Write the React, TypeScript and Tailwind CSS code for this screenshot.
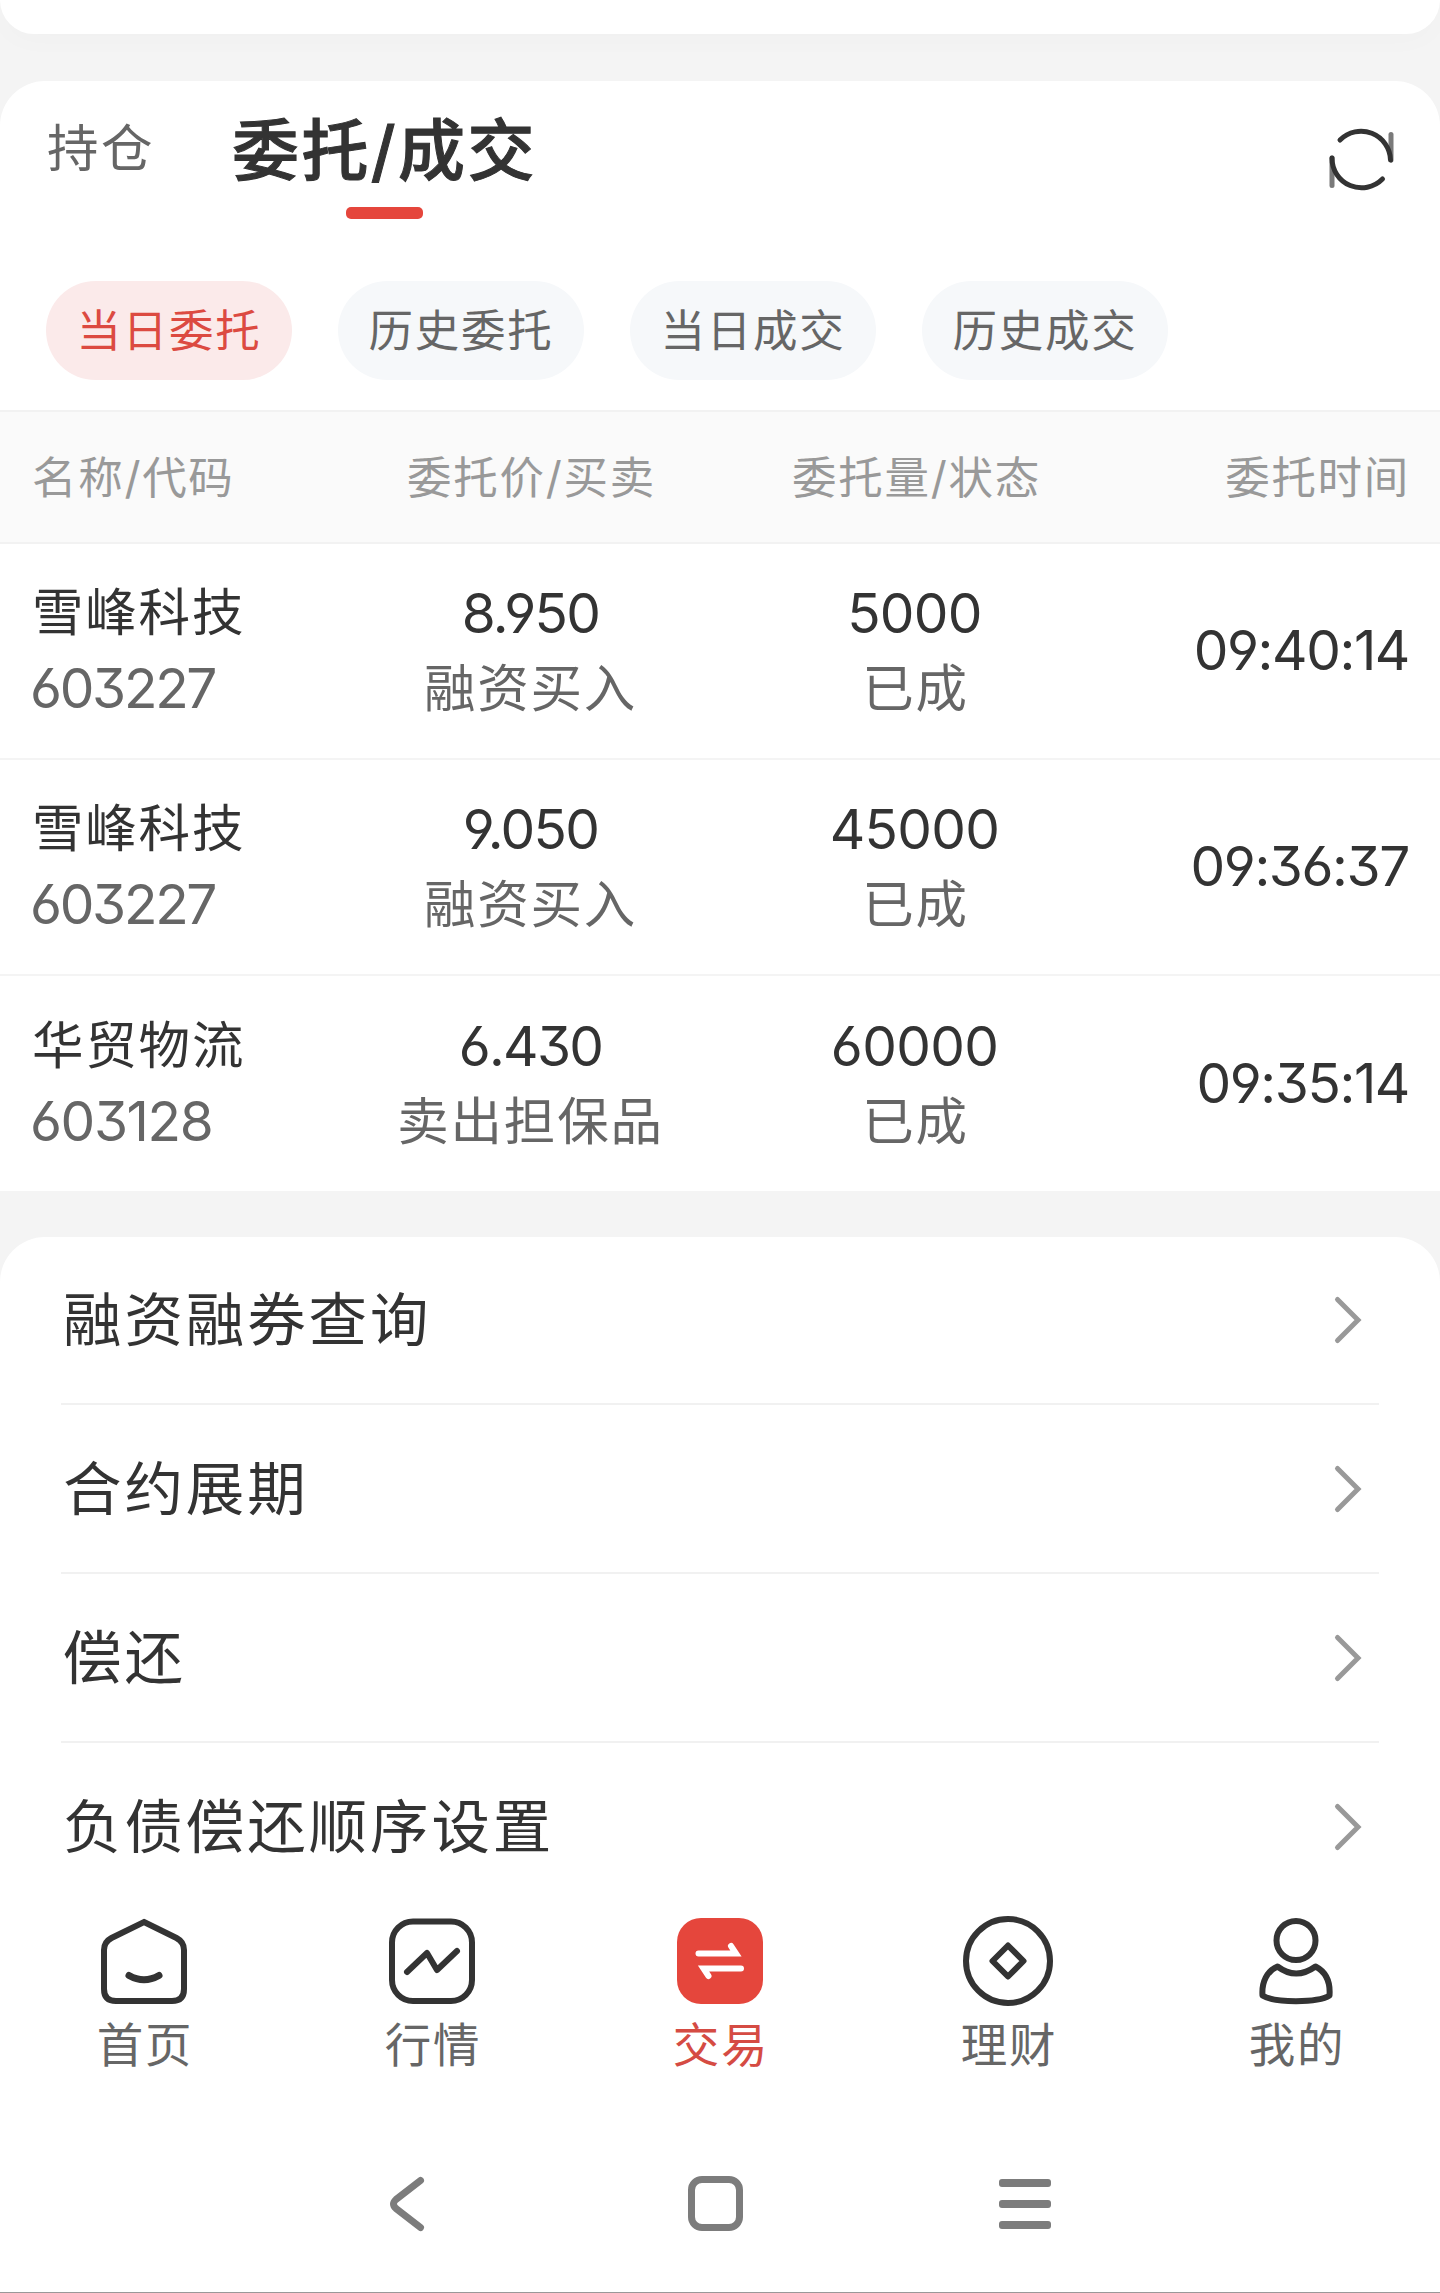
import { Fragment, type ReactNode } from "react";

const pills = ["当日委托", "历史委托", "当日成交", "历史成交"];
const heads = ["名称/代码", "委托价/买卖", "委托量/状态", "委托时间"];

const orders = [
  { name: "雪峰科技", code: "603227", price: "8.950", side: "融资买入", amount: "5000", state: "已成", time: "09:40:14" },
  { name: "雪峰科技", code: "603227", price: "9.050", side: "融资买入", amount: "45000", state: "已成", time: "09:36:37" },
  { name: "华贸物流", code: "603128", price: "6.430", side: "卖出担保品", amount: "60000", state: "已成", time: "09:35:14" },
];

const menu = ["融资融券查询", "合约展期", "偿还", "负债偿还顺序设置"];

const GRID = "grid grid-cols-[306px_385px_385px_1fr] px-8";
const NUM =
  "font-['Inter','Noto_Sans_CJK_SC',sans-serif] [font-feature-settings:'cv03','cv04','cv09'] text-[55px] leading-[56px]";
const CJK = "text-[51.500px] leading-[56px] tracking-[1.800px]";

/** Sets the slashes of a label in the Latin face. */
function Slashed({ text }: { text: string }) {
  return (
    <>
      {text.split("/").map((part, i) => (
        <Fragment key={part}>
          {i > 0 && <span className="font-['Inter',sans-serif] leading-none">/</span>}
          {part}
        </Fragment>
      ))}
    </>
  );
}

function RefreshIcon() {
  return (
    <svg width="68" height="68" viewBox="1327 125 68 68" fill="none" stroke="#333" strokeWidth="5" strokeLinecap="round">
      <path d="M1340 140A29.500 29.500 0 0 1 1390.500 160" />
      <path d="M1391 160V134.500" strokeOpacity=".65" />
      <path d="M1382.500 179A29.500 29.500 0 0 1 1332 158" />
      <path d="M1332 158V185.500" strokeOpacity=".65" />
    </svg>
  );
}

function TabIcon({ children }: { children: ReactNode }) {
  return (
    <svg width="92" height="92" viewBox="0 0 92 92" fill="none" stroke="#333" strokeWidth="6" strokeLinecap="round" strokeLinejoin="round">
      {children}
    </svg>
  );
}

const tabs = [
  {
    label: "首页",
    icon: (
      <>
        <path strokeLinejoin="miter" d="M46 7L78.500 23Q86 27 86 35V74Q86 86 74 86H18Q6 86 6 74V35Q6 27 13.500 23Z" />
        <path strokeWidth="7" d="M31 60.500Q46 69 61 60.500" />
      </>
    ),
  },
  {
    label: "行情",
    icon: (
      <>
        <rect x="6" y="6.500" width="80" height="79.500" rx="21" />
        <path d="M21 57L41 38L51 55L71 36" />
      </>
    ),
  },
  {
    label: "交易",
    active: true,
    icon: (
      <>
        <rect x="3" y="3" width="86" height="86" rx="24" fill="#e5463c" stroke="none" />
        <path stroke="#fff" strokeLinejoin="miter" d="M24.500 38.500H62L57 31" />
        <path stroke="#fff" strokeLinejoin="miter" d="M67 53.500H29.500L34.500 61" />
      </>
    ),
  },
  {
    label: "理财",
    icon: (
      <>
        <circle cx="46" cy="46" r="42" />
        <path d="M46 30.500L61.500 46L46 61.500L30.500 46Z" />
      </>
    ),
  },
  {
    label: "我的",
    icon: (
      <>
        <circle cx="46" cy="25.500" r="19.500" />
        <path d="M27.500 51.500Q46 65.500 65.500 51.500C76 57 80.500 67 79.500 80.500C68 88 24 88 12.500 80.500C11.500 67 17 56 27.500 51.500Z" />
      </>
    ),
  },
];

export default function App() {
  return (
    <div className="flex h-[2293px] w-[1440px] flex-col overflow-hidden border-b border-[#999] bg-[#f4f4f4] font-['Noto_Sans_CJK_SC',sans-serif] text-[#333]">
      <div className="h-[34px] shrink-0 rounded-b-[45px] bg-white shadow-[0_6px_30px_rgba(0,0,0,0.02)]" />

      <section className="mt-[47px] flex h-[1110px] shrink-0 flex-col rounded-t-[45px] bg-white">
        <div className="flex h-[200px] shrink-0 justify-between pr-[45px] pl-[47px]">
          <div className="flex">
            <div className="mt-6 h-20 w-[108px] text-[51.500px] leading-[80px] tracking-[2.500px] text-[#666]">持仓</div>
            <div className="ml-[77px] flex flex-col items-center">
              <div className="mt-[19px] h-[92px] text-[67px] leading-[92px] font-medium tracking-[2.400px] [-webkit-text-stroke:1px_#333]">
                <span>委托</span>
                <span className="font-['Inter',sans-serif] leading-none">/</span>
                <span>成交</span>
              </div>
              <div className="mt-[15px] h-3 w-[77px] rounded-[5px] bg-[#e5463c]" />
            </div>
          </div>
          <div className="mt-11">
            <RefreshIcon />
          </div>
        </div>

        <div className="flex gap-[46px] pl-[46px]">
          {pills.map((p, i) => (
            <div
              key={p}
              className={`flex h-[99px] w-[246px] items-center justify-center rounded-full pb-[5px] text-[44.500px] tracking-[1.700px] ${
                i === 0 ? "bg-[#fbeaea] text-[#dc4a41]" : "bg-[#f6f8fa] text-[#666]"
              }`}
            >
              {p}
            </div>
          ))}
        </div>

        <div className={`${GRID} mt-[30px] h-[134px] shrink-0 items-center border-y-2 border-[#f2f2f2] bg-[#fafafa] pb-1 text-[44.500px] tracking-[1.700px] text-[#999]`}>
          {heads.map((h, i) => (
            <div key={h} className={i === 0 ? "" : i === 3 ? "-mr-0.5 text-right" : "pl-0.5 text-center"}>
              <Slashed text={h} />
            </div>
          ))}
        </div>

        {orders.map((o, i) => (
          <div key={o.time} className={`${GRID} h-[216px] shrink-0 items-center ${i < 2 ? "border-b-2 border-[#f4f4f4]" : ""}`}>
            <div className="-mt-1.5 flex flex-col gap-6">
              <span className={CJK}>{o.name}</span>
              <span
                className={`${NUM} -mt-px -ml-0.5 text-[#666] ${o.code === "603128" ? "tracking-[-1.400px]" : "tracking-[-2.300px]"}`}
              >
                {o.code}
              </span>
            </div>
            <div className="-mt-[7px] flex flex-col items-center gap-4">
              <span className={`${NUM} mt-0.5 tracking-[-1.700px]`}>{o.price}</span>
              <span className={`${CJK} text-[#666]`}>{o.side}</span>
            </div>
            <div className="-mt-[7px] flex flex-col items-center gap-4">
              <span className={`${NUM} mt-0.5 mr-0.5 tracking-[-0.700px]`}>{o.amount}</span>
              <span className={`${CJK} text-[#666]`}>{o.state}</span>
            </div>
            <span className={`${NUM} -mt-[3px] -mr-px text-right tracking-[-1.400px]`}>{o.time}</span>
          </div>
        ))}
      </section>

      <section className="mt-[46px] h-[653px] shrink-0 overflow-hidden rounded-t-[45px] bg-white px-[61px]">
        {menu.map((m) => (
          <div key={m} className="flex h-[169px] items-center justify-between border-b-2 border-[#f1f1f1] pr-4 pl-0.5 first:h-[168px]">
            <span className="pb-2 text-[58.500px] leading-[80px] tracking-[2.900px]">{m}</span>
            <svg width="30" height="50" viewBox="0 0 30 50" fill="none" stroke="#999" strokeWidth="5" strokeLinecap="round">
              <path d="M4.500 4.500L25 25L4.500 45.500" />
            </svg>
          </div>
        ))}
      </section>

      <nav className="grid h-[200px] shrink-0 grid-cols-5 bg-white pt-[25px]">
        {tabs.map((t) => (
          <div key={t.label} className="flex flex-col items-center">
            <TabIcon>{t.icon}</TabIcon>
            <span className={`mt-[5px] pl-0.5 text-[46.500px] leading-[60px] tracking-[1.700px] ${t.active ? "text-[#d54b43]" : "text-[#666]"}`}>
              {t.label}
            </span>
          </div>
        ))}
      </nav>

      <div className="flex grow items-start bg-white pt-[86px] pl-[388px]">
        <svg width="40" height="56" viewBox="0 0 40 56" fill="none" stroke="#7c7c7c" strokeWidth="7" strokeLinecap="round">
          <path d="M32.500 4.500L8 23.500Q3 28 8 32.500L32.500 51.500" />
        </svg>
        <div className="ml-[260px] size-[55px] rounded-[14px] border-7 border-[#7c7c7c]" />
        <div className="mt-[3px] ml-64 flex flex-col gap-[13px]">
          <div className="h-2 w-[52px] rounded-[3px] bg-[#7c7c7c]" />
          <div className="h-2 w-[52px] rounded-[3px] bg-[#7c7c7c]" />
          <div className="h-2 w-[52px] rounded-[3px] bg-[#7c7c7c]" />
        </div>
      </div>
    </div>
  );
}
